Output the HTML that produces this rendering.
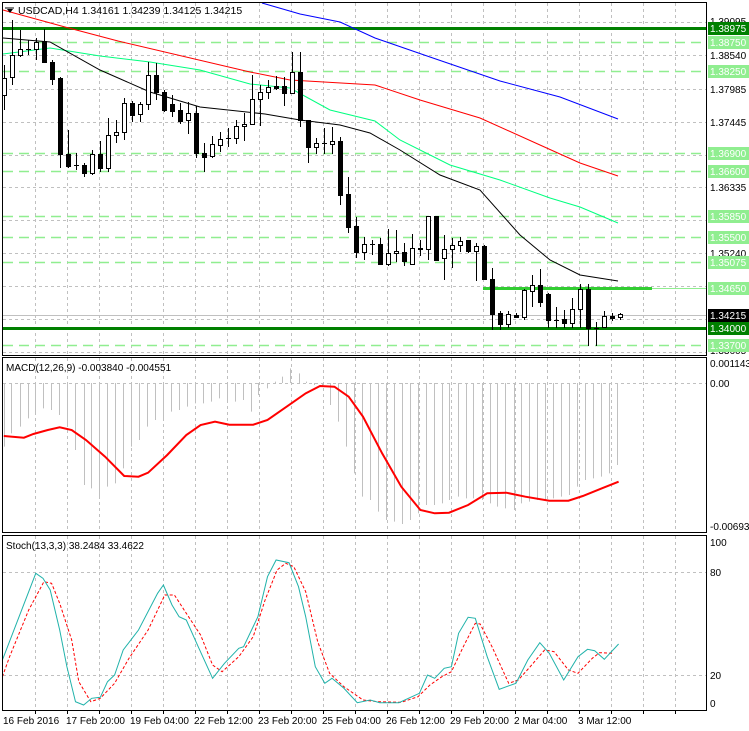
<!DOCTYPE html>
<html><head><meta charset="utf-8"><style>
html,body{margin:0;padding:0;background:#fff;width:749px;height:731px;overflow:hidden}
svg{display:block;font-family:"Liberation Sans",Tahoma,sans-serif;font-size:10px}
</style></head><body>
<svg id="s" width="749" height="731" viewBox="0 0 749 731" xmlns="http://www.w3.org/2000/svg">
<rect width="749" height="731" fill="#fff"/>
<g id="grid" stroke="#c0c0c0" stroke-dasharray="3,3" stroke-width="1"></g>
<g id="hl"></g>
<g id="ma" fill="none" stroke-width="1"></g>
<g id="candles"></g>
<g id="macd"></g>
<g id="stoch" fill="none"></g>
<!-- panel borders -->
<g stroke="#000" stroke-width="1" fill="none">
<rect x="2.5" y="2.5" width="704" height="353"/>
<rect x="2.5" y="357.5" width="704" height="175"/>
<rect x="2.5" y="535.5" width="704" height="175"/>
</g>
<!-- texts -->
<polygon points="7,9 13,9 10,13" fill="#000"/>
<line x1="5" y1="8" x2="14" y2="8" stroke="#000"/>
<text x="18" y="14" fill="#000" font-size="10.5">USDCAD,H4  1.34161 1.34239 1.34125 1.34215</text>
<text x="6" y="371" fill="#000" font-size="10">MACD(12,26,9) -0.003840 -0.004551</text>
<text x="6" y="549" fill="#000" font-size="10">Stoch(13,3,3) 38.2484 33.4622</text>
<g id="axis" fill="#000" font-size="10"></g>
<g fill="#000" font-size="10">
<text x="710" y="367">0.001143</text>
<text x="710" y="387">0.00</text>
<text x="710" y="530">-0.006932</text>
<text x="710" y="546">100</text>
<text x="710" y="576">80</text>
<text x="710" y="679">20</text>
<text x="710" y="707">0</text>
<text x="3" y="724">16 Feb 2016</text>
<text x="66" y="724">17 Feb 20:00</text>
<text x="130" y="724">19 Feb 04:00</text>
<text x="194" y="724">22 Feb 12:00</text>
<text x="258" y="724">23 Feb 20:00</text>
<text x="322" y="724">25 Feb 04:00</text>
<text x="386" y="724">26 Feb 12:00</text>
<text x="450" y="724">29 Feb 20:00</text>
<text x="514" y="724">2 Mar 04:00</text>
<text x="578" y="724">3 Mar 12:00</text>
<text x="710" y="25">1.39095</text>
<text x="710" y="59">1.38540</text>
<text x="710" y="93">1.37985</text>
<text x="710" y="126">1.37445</text>
<text x="710" y="191">1.36335</text>
<text x="710" y="257">1.35240</text>
<text x="710" y="354">1.33605</text>
</g>
<g id="labels" font-size="10"></g>
</svg>
<script>
var NS="http://www.w3.org/2000/svg";
function el(p,t,a){var e=document.createElementNS(NS,t);for(var k in a)e.setAttribute(k,a[k]);p.appendChild(e);return e;}
var g=document.getElementById('grid');
for(var x=35;x<706;x+=32){
 el(g,'line',{x1:x+.5,y1:3,x2:x+.5,y2:355});
 el(g,'line',{x1:x+.5,y1:358,x2:x+.5,y2:532});
 el(g,'line',{x1:x+.5,y1:536,x2:x+.5,y2:710});
 el(document.getElementById('axis'),'line',{x1:x+.5,y1:711,x2:x+.5,y2:714,stroke:'#000'});
}
[22,55,89,122,155,187,220,253,286,319,352].forEach(function(y){el(g,'line',{x1:3,y1:y+.5,x2:706,y2:y+.5});});
el(g,'line',{x1:3,y1:383.5,x2:706,y2:383.5});
el(g,'line',{x1:3,y1:572.5,x2:706,y2:572.5});
el(g,'line',{x1:3,y1:675.5,x2:706,y2:675.5});
var h=document.getElementById('hl');
el(h,'line',{x1:3,y1:315.5,x2:706,y2:315.5,stroke:'#c0c0c0'});
[42,71,153,171,216,237,262,345].forEach(function(y){el(h,'line',{x1:3,y1:y+.5,x2:706,y2:y+.5,stroke:'#90ee90','stroke-width':1.5,'stroke-dasharray':'10,6'});});
el(h,'line',{x1:652,y1:288.5,x2:706,y2:288.5,stroke:'#90ee90','stroke-width':1});
el(h,'line',{x1:483,y1:288.5,x2:652,y2:288.5,stroke:'#32cd32','stroke-width':3});
el(h,'line',{x1:3,y1:28.5,x2:706,y2:28.5,stroke:'#008000','stroke-width':3});
el(h,'line',{x1:3,y1:328.5,x2:706,y2:328.5,stroke:'#008000','stroke-width':3});
function pl(p,pts,st,w,extra){var s=pts.map(function(q){return q[0]+','+q[1]}).join(' ');var a={points:s,stroke:st,'stroke-width':w,fill:'none'};for(var k in extra)a[k]=extra[k];el(p,'polyline',a);}
var m=document.getElementById('ma');
pl(m,[[262,3],[300,14],[340,22],[375,38],[430,57],[500,81],[560,97],[618,119]],'#0000ff',1);
pl(m,[[3,10],[65,27],[118,41],[250,72],[290,80],[375,85],[420,100],[480,118],[540,145],[580,163],[618,176]],'#ff0000',1);
pl(m,[[3,54],[50,48],[100,56],[150,62],[200,70],[250,84],[290,88],[330,110],[375,121],[400,140],[450,165],[500,180],[550,198],[580,207],[618,223]],'#00ff7f',1);
pl(m,[[3,38],[50,42],[100,70],[150,92],[200,107],[265,114],[300,120],[340,125],[370,133],[400,150],[440,175],[480,190],[520,235],[550,260],[580,275],[618,281]],'#000',1);
// candles: [type, top, bottom, high, low]  type w/b/d
var C=[['w',78,95,65,110],['w',55,77,20,85],['w',49,55,30,57],['d',49,49,40,55],['w',42,49,38,60],['b',41,62,29,63],['b',62,79,60,85],['b',78,154,77,168],['b',154,166,130,168],['d',165,165,153,170],['b',165,173,163,177],['w',154,173,150,175],['b',154,168,141,172],['w',135,168,118,172],['w',132,135,120,143],['w',103,132,98,140],['b',103,115,101,122],['w',104,114,102,122],['w',75,104,62,110],['b',75,92,63,100],['b',92,110,90,112],['b',104,111,95,117],['b',110,121,103,124],['w',113,120,102,134],['b',113,153,106,158],['b',153,157,143,172],['w',144,156,136,158],['w',139,145,132,152],['d',138,138,128,147],['w',126,138,120,144],['w',124,126,113,141],['w',99,124,75,125],['w',92,99,85,126],['w',87,92,80,99],['b',86,88,76,90],['b',86,93,77,106],['w',72,93,52,94],['b',72,120,52,127],['b',120,147,120,163],['w',143,147,138,154],['d',143,143,128,154],['w',141,144,127,154],['b',141,195,137,205],['b',194,227,177,233],['b',226,252,217,258],['w',244,252,237,260],['d',244,244,240,255],['b',244,264,238,264],['w',253,264,229,266],['w',251,253,230,262],['b',252,261,243,266],['w',248,264,234,264],['b',248,249,240,256],['w',216,249,216,260],['b',216,260,216,260],['w',249,258,235,280],['w',245,249,238,268],['w',241,245,237,252],['b',240,251,240,253],['w',246,251,243,281],['b',246,279,245,280],['b',279,314,268,330],['b',313,324,311,330],['w',314,324,311,328],['b',315,317,313,318],['w',290,317,289,320],['w',285,291,275,307],['b',285,302,269,307],['b',294,320,293,328],['d',320,320,307,328],['b',319,323,310,328],['w',309,323,298,328],['w',289,309,284,328],['b',289,328,284,346],['d',328,328,322,346],['w',316,327,311,328],['b',316,318,313,321],['w',314,317,313,320]];
var cg=document.getElementById('candles');
C.forEach(function(c,i){var x=4+8*i;
 el(cg,'line',{x1:x+.5,y1:c[3],x2:x+.5,y2:c[4],stroke:'#000'});
 if(c[0]=='d'){el(cg,'line',{x1:x-2,y1:c[1]+.5,x2:x+3,y2:c[1]+.5,stroke:'#000'});}
 else {var hh=Math.max(c[2]-c[1],1);el(cg,'rect',{x:x-2+.5,y:c[1]+.5,width:4,height:hh,fill:c[0]=='w'?'#fff':'#000',stroke:'#000'});}
});
// MACD histogram
var hz=[[8,440],[24,400],[41,380],[58,355],[74,345],[91,325],[107,330],[124,345],[141,380],[158,450],[175,555],[191,565],[208,590],[225,560],[241,550],[258,505],[274,440],[291,420],[308,380],[325,360],[341,355],[358,335],[375,330],[391,320],[408,310],[425,310],[441,305],[458,295],[475,300],[491,305],[508,300],[525,335],[541,285],[558,265],[575,245],[591,230],[608,205],[625,220],[641,245],[658,255],[675,260],[691,315],[708,365],[725,440],[741,520],[758,590],[775,600],[791,635],[808,660],[825,665],[841,672],[858,660],[875,640],[891,615],[908,615],[925,610],[941,600],[958,590],[975,595],[991,595],[1008,600],[1025,610],[1041,620],[1058,625],[1075,630],[1091,610],[1108,605],[1125,600],[1141,600],[1158,595],[1175,590],[1191,585],[1208,560],[1225,540],[1241,535],[1258,530],[1275,520],[1291,495]];
var mg=document.getElementById('macd');var sx=749/1568;
hz.forEach(function(q){var x=Math.round(q[0]*sx)+.5,y=300+q[1]/3;el(mg,'line',{x1:x,y1:383,x2:x,y2:y,stroke:'#c0c0c0'});});
var sig=[[8,408],[50,413],[70,402],[100,390],[125,382],[150,390],[180,420],[220,470],[260,528],[290,530],[310,518],[350,465],[390,405],[420,375],[450,365],[480,374],[530,374],[560,360],[600,320],[640,280],[670,258],[700,260],[730,290],[760,350],[800,460],[840,560],[880,630],[910,640],[940,638],[980,615],[1020,580],[1060,578],[1100,590],[1150,602],[1190,602],[1220,588],[1260,565],[1295,545]];
pl(mg,sig.map(function(q){return [(q[0]*sx).toFixed(1),(300+q[1]/3).toFixed(1)]}),'#ff0000',2);
var sg=document.getElementById('stoch');
var st=[[5,420],[75,160],[90,175],[105,210],[125,330],[140,440],[158,545],[175,555],[192,535],[210,532],[225,485],[240,465],[258,390],[290,330],[330,220],[342,195],[360,255],[375,290],[390,300],[415,380],[445,475],[470,430],[500,385],[510,380],[540,290],[560,170],[578,120],[605,128],[625,200],[640,290],[660,440],[680,490],[695,475],[720,505],[748,548],[775,540],[795,548],[835,548],[855,535],[878,520],[895,465],[910,475],[930,445],[945,440],[960,340],[980,292],[995,295],[1020,410],[1045,508],[1080,490],[1105,420],[1130,368],[1150,400],[1180,480],[1210,410],[1230,388],[1245,392],[1265,418],[1295,372]];
var ss=[[5,470],[20,410],[60,270],[92,185],[108,190],[125,250],[150,360],[165,485],[190,545],[210,535],[240,490],[270,415],[310,330],[345,225],[365,225],[390,280],[420,345],[445,435],[465,455],[500,410],[530,350],[555,240],[580,150],[598,130],[615,140],[640,215],[665,365],[690,460],[720,500],[760,540],[790,545],[840,547],[875,530],[900,495],[925,470],[945,455],[970,380],[995,310],[1005,312],[1030,380],[1065,490],[1085,480],[1110,440],[1140,390],[1160,395],[1190,450],[1210,460],[1240,415],[1255,398],[1285,400]];
function cv(a){return a.map(function(q){return [(q[0]*sx).toFixed(1),(520+q[1]/3).toFixed(1)]});}
pl(sg,cv(ss),'#ff0000',1,{'stroke-dasharray':'3,2'});
pl(sg,cv(st),'#20b2aa',1);
// right labels
var L=[['1.38975',28,'#008000'],['1.38750',42,'#90ee90'],['1.38250',71,'#90ee90'],['1.36900',153,'#90ee90'],['1.36600',171,'#90ee90'],['1.35850',216,'#90ee90'],['1.35500',237,'#90ee90'],['1.35075',262,'#90ee90'],['1.34650',288,'#90ee90'],['1.34215',315,'#000'],['1.34000',328,'#008000'],['1.33700',345,'#90ee90']];
var lg=document.getElementById('labels');
L.forEach(function(l){el(lg,'rect',{x:708,y:l[1]-6,width:41,height:13,fill:l[2]});var t=el(lg,'text',{x:710,y:l[1]+4,fill:'#fff'});t.textContent=l[0];});
</script>
</body></html>
